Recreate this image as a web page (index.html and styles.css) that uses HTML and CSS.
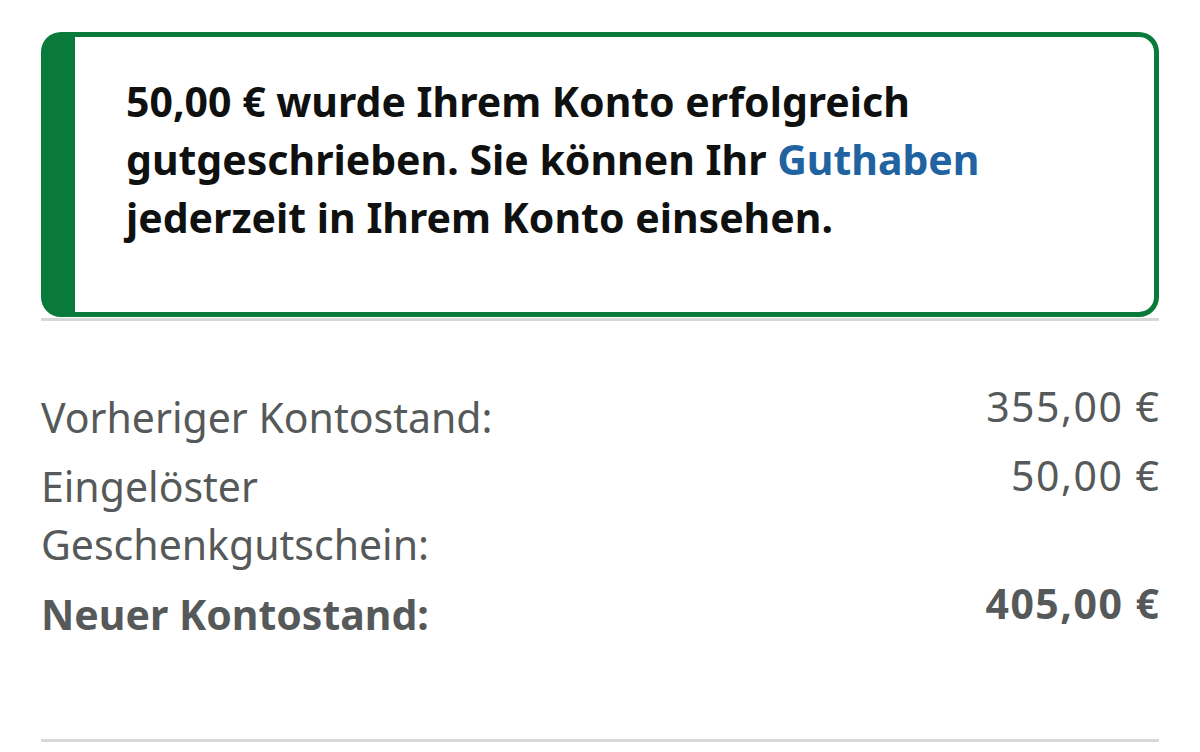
FILE: index.html
```html
<!DOCTYPE html>
<html lang="de">
<head>
<meta charset="utf-8">
<link rel="stylesheet" href="styles.css">
</head>
<body>
<div class="page">
  <div class="alert">
    <p class="alert-text">50,00 € wurde Ihrem Konto erfolgreich gutgeschrieben. Sie können Ihr <a class="link" href="#">Guthaben</a> jederzeit in Ihrem Konto einsehen.</p>
  </div>
  <div class="divider"></div>
  <div class="summary">
    <div class="row">
      <div class="label">Vorheriger Kontostand:</div>
      <div class="value">355,00 €</div>
    </div>
    <div class="row">
      <div class="label">Eingelöster<br>Geschenkgutschein:</div>
      <div class="value">50,00 €</div>
    </div>
    <div class="row total">
      <div class="label">Neuer Kontostand:</div>
      <div class="value">405,00 €</div>
    </div>
  </div>
  <div class="divider bottom"></div>
</div>
</body>
</html>
```

FILE: styles.css
```css
html, body {
  margin: 0;
  padding: 0;
  background: #ffffff;
}
body {
  font-family: "Noto Sans", "Open Sans", sans-serif;
  width: 1200px;
  height: 752px;
  overflow: hidden;
}
.page {
  padding: 32px 41px 0 41px;
}
.alert {
  border: 5px solid #0a7a3a;
  border-left-width: 34px;
  border-radius: 20px;
  box-sizing: border-box;
  height: 285px;
  padding: 35px 40px 0 51px;
}
.alert-text {
  margin: 0;
  font-size: 41px;
  line-height: 58px;
  font-weight: 700;
  color: #0f1111;
  max-width: 900px;
}
.link {
  color: #2162a1;
  text-decoration: none;
}
.divider {
  height: 3px;
  background: #d5d9d9;
  margin-top: 1px;
}
.summary {
  padding-top: 67px;
  display: flex;
  flex-direction: column;
  gap: 11px;
}
.row {
  display: flex;
  justify-content: space-between;
  align-items: flex-start;
  color: #565959;
  font-size: 41px;
}
.label {
  line-height: 58px;
}
.value {
  line-height: 36px;
  text-align: right;
  letter-spacing: 1.5px;
  margin-right: -1.5px;
}
.total {
  font-weight: 700;
  margin-top: 1px;
}
.divider.bottom {
  margin-top: 96px;
}
```
